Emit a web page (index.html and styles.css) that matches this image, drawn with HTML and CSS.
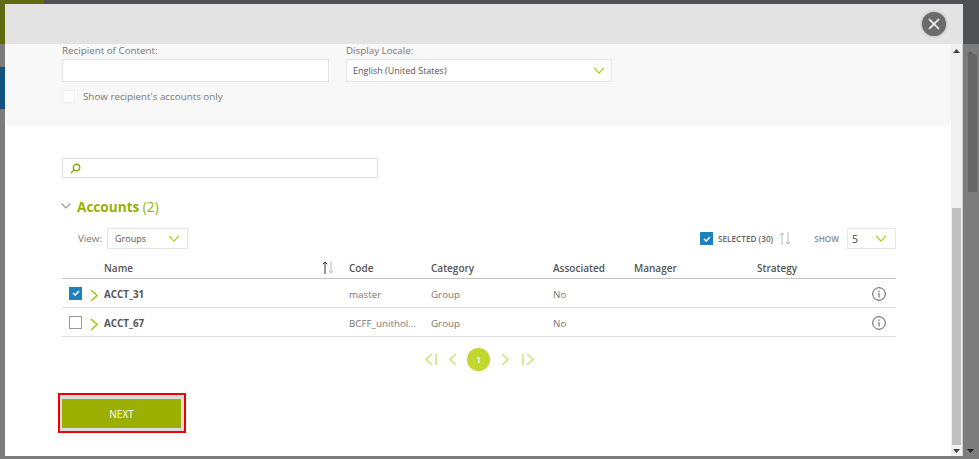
FILE: index.html
```html
<!DOCTYPE html>
<html>

<head>
  <meta charset="utf-8">
  <title>Select Accounts</title>
  <link rel="stylesheet" href="styles.css">
</head>

<body>

  <div class="topstrip">
    <div class="topstrip-olive"></div>
  </div>

  <div class="screen">

    <div class="leftstrip">
      <div class="left-olive"></div>
      <div class="left-gray"></div>
      <div class="left-blue"></div>
    </div>

    <div class="modal">
      <div class="modal-header">
        <button class="close-btn">
          <svg width="12" height="12" viewBox="0 0 12 12"><path d="M1 1 11 11M11 1 1 11" stroke="#fff" stroke-width="1.6" fill="none" /></svg>
        </button>
      </div>

      <div class="modal-main">
        <div class="modal-content">

          <div class="recipient-panel">
            <div class="recipient-fields">
              <div class="field field-recipient">
                <label>Recipient of Content:</label>
                <div class="text-box"></div>
              </div>
              <div class="field field-locale">
                <label>Display Locale:</label>
                <div class="text-box select-box">
                  <span class="locale-value">English (United States)</span>
                  <svg class="select-arrow" width="12" height="7" viewBox="0 0 13 8"><path d="M1 1 6.500 7 12 1" /></svg>
                </div>
              </div>
            </div>
            <div class="recipient-only">
              <span class="blank-check"></span>
              <span>Show recipient's accounts only</span>
            </div>
          </div>

          <div class="accounts">
            <div class="search-box">
              <svg width="11" height="11" viewBox="0 0 11 11"><circle cx="6.500" cy="4.500" r="3.200" /><path d="M4.200 6.800 1 10" /></svg>
            </div>

            <h2 class="accounts-title">
              <svg width="10" height="6" viewBox="0 0 10 6"><path d="M.5.500 5 5 9.500.500" /></svg>
              <span><b>Accounts</b> (2)</span>
            </h2>

            <div class="toolbar">
              <div class="toolbar-left">
                <span class="view-label">View:</span>
                <div class="small-select select-groups">
                  <span>Groups</span>
                  <svg class="select-arrow" width="12" height="7" viewBox="0 0 13 8"><path d="M1 1 6.500 7 12 1" /></svg>
                </div>
              </div>
              <div class="toolbar-right">
                <span class="tick-box">
                  <svg width="8" height="6" viewBox="0 0 8 6"><path d="M1 3 3.200 5 7 1" /></svg>
                </span>
                <span class="selected-count">SELECTED (30)</span>
                <svg class="sort-arrows" width="12" height="13" viewBox="0 0 12 13"><path class="faded" d="M3 13V1M.8 3.200 3 1 5.200 3.200M9 0V12M6.800 9.800 9 12 11.200 9.800" /></svg>
                <span class="show-label">SHOW</span>
                <div class="small-select select-show">
                  <span>5</span>
                  <svg class="select-arrow" width="12" height="7" viewBox="0 0 13 8"><path d="M1 1 6.500 7 12 1" /></svg>
                </div>
              </div>
            </div>

            <table class="accounts-table">
              <colgroup>
                <col class="col-check">
                <col class="col-name">
                <col class="col-code">
                <col class="col-category">
                <col class="col-associated">
                <col class="col-manager">
                <col class="col-strategy">
                <col class="col-info">
              </colgroup>
              <thead>
                <tr>
                  <th></th>
                  <th>
                    <div class="name-head">
                      <span>Name</span>
                      <svg class="sort-arrows" width="12" height="13" viewBox="0 0 12 13"><path class="dark" d="M3 13V1M.8 3.200 3 1 5.200 3.200" /><path class="faded" d="M9 0V12M6.800 9.800 9 12 11.200 9.800" /></svg>
                    </div>
                  </th>
                  <th>Code</th>
                  <th>Category</th>
                  <th>Associated</th>
                  <th>Manager</th>
                  <th>Strategy</th>
                  <th></th>
                </tr>
              </thead>
              <tbody>
                <tr>
                  <td class="check-cell">
                    <div class="row-check">
                      <span class="tick-box">
                        <svg width="8" height="6" viewBox="0 0 8 6"><path d="M1 3 3.200 5 7 1" /></svg>
                      </span>
                      <svg class="row-arrow" width="8" height="13" viewBox="0 0 8 13"><path d="M1 1 7 6.500 1 12" /></svg>
                    </div>
                  </td>
                  <td class="account-name">ACCT_31</td>
                  <td>master</td>
                  <td>Group</td>
                  <td>No</td>
                  <td></td>
                  <td></td>
                  <td>
                    <svg class="info" width="14" height="14" viewBox="0 0 14 14"><circle cx="7" cy="7" r="6.300" /><path d="M7 6V10.500M7 3.500V5" /></svg>
                  </td>
                </tr>
                <tr>
                  <td class="check-cell">
                    <div class="row-check">
                      <span class="empty-box"></span>
                      <svg class="row-arrow" width="8" height="13" viewBox="0 0 8 13"><path d="M1 1 7 6.500 1 12" /></svg>
                    </div>
                  </td>
                  <td class="account-name">ACCT_67</td>
                  <td>BCFF_unithol...</td>
                  <td>Group</td>
                  <td>No</td>
                  <td></td>
                  <td></td>
                  <td>
                    <svg class="info" width="14" height="14" viewBox="0 0 14 14"><circle cx="7" cy="7" r="6.300" /><path d="M7 6V10.500M7 3.500V5" /></svg>
                  </td>
                </tr>
              </tbody>
            </table>

            <div class="pager">
              <svg class="page-first" width="12" height="13" viewBox="0 0 12 13"><path d="M7 1 1 6.500 7 12M11 1V12" /></svg>
              <svg width="8" height="13" viewBox="0 0 8 13"><path d="M7 1 1 6.500 7 12" /></svg>
              <span class="page-current">1</span>
              <svg width="8" height="13" viewBox="0 0 8 13"><path d="M1 1 7 6.500 1 12" /></svg>
              <svg class="page-last" width="12" height="13" viewBox="0 0 12 13"><path d="M5 1 11 6.500 5 12M1 1V12" /></svg>
            </div>

            <div class="next-mark">
              <button class="next-btn">NEXT</button>
            </div>
          </div>

        </div>

        <!-- scrollbar of the dialog -->
        <div class="inner-scroll">
          <svg class="scroll-up" width="7" height="4" viewBox="0 0 7 4"><path d="M3.500 0 7 4H0Z" /></svg>
          <div class="inner-thumb"></div>
          <svg class="scroll-down" width="7" height="4" viewBox="0 0 7 4"><path d="M0 0H7L3.500 4Z" /></svg>
        </div>
      </div>
    </div>

    <!-- scrollbar of the page behind -->
    <div class="outer-scroll">
      <div class="outer-scroll-head"></div>
      <svg class="outer-up" width="7" height="4" viewBox="0 0 7 4"><path d="M3.500 0 7 4H0Z" /></svg>
      <div class="outer-thumb"></div>
      <svg class="outer-down" width="7" height="4" viewBox="0 0 7 4"><path d="M0 0H7L3.500 4Z" /></svg>
    </div>

  </div>

</body>

</html>
```

FILE: styles.css
```css
html,
body {
  margin: 0;
  height: 459px;
  overflow: hidden;
}

body {
  background: #7c7c7c;
  font-family: "Open Sans", sans-serif;
  font-size: 9.8px;
  color: #777;
}

.topstrip {
  height: 4px;
  background: #4f5152;
}

.topstrip-olive {
  width: 44px;
  height: 4px;
  background: #5f6b0e;
}

.screen {
  display: flex;
  height: 452px;
}

/* page behind the dialog */
.leftstrip {
  width: 5px;
  flex: none;
}

.left-olive {
  height: 40px;
  background: #5f6b0e;
}

.left-gray {
  height: 23px;
  background: #7c7c7c;
}

.left-blue {
  height: 42px;
  background: #14527f;
}

.modal {
  width: 958px;
  flex: none;
  display: flex;
  flex-direction: column;
  background: #fff;
}

.modal-header {
  height: 40px;
  flex: none;
  display: flex;
  justify-content: flex-end;
  align-items: center;
  padding-right: 17px;
  background: #e3e3e3;
}

.close-btn {
  width: 24px;
  height: 24px;
  display: flex;
  align-items: center;
  justify-content: center;
  padding: 0;
  border: none;
  border-radius: 50%;
  background: #6b6b6b;
  box-shadow: 0 0 3px rgba(0, 0, 0, 0.35);
}

.modal-main {
  flex: 1;
  display: flex;
  min-height: 0;
}

.modal-content {
  flex: 1;
  min-width: 0;
}

.recipient-panel {
  height: 82px;
  box-sizing: border-box;
  padding: 0 0 0 57px;
  background: #f8f8f8;
}

.recipient-fields {
  display: flex;
  gap: 17px;
}

.field label {
  display: block;
  height: 15px;
  line-height: 13px;
}

.field-recipient {
  width: 267px;
}

.field-locale {
  width: 266px;
}

.text-box {
  height: 23px;
  box-sizing: border-box;
  border: 1px solid #e6e6e6;
  background: #fff;
}

.select-box {
  display: flex;
  align-items: center;
  justify-content: space-between;
  padding: 0 6px;
  color: #555;
  font-size: 9px;
}

.select-arrow path {
  fill: none;
  stroke: #b5cc18;
  stroke-width: 1.5;
}

.recipient-only {
  display: flex;
  align-items: center;
  gap: 8px;
  height: 13px;
  margin-top: 8px;
  line-height: 12px;
}

.blank-check {
  width: 13px;
  height: 13px;
  box-sizing: border-box;
  border: 1px solid #eee;
  background: #fff;
}

.accounts {
  padding: 32px 55px 0 57px;
}

.search-box {
  width: 316px;
  height: 20px;
  box-sizing: border-box;
  display: flex;
  align-items: center;
  padding-left: 7px;
  border: 1px solid #e0e0e0;
}

.search-box svg {
  fill: none;
  stroke: #8fa800;
  stroke-width: 1.4;
}

.accounts-title {
  display: flex;
  align-items: center;
  gap: 6px;
  height: 20px;
  margin: 18px 0 0 -1px;
  font-size: 13.6px;
  font-weight: normal;
  color: #9aaf00;
}

.accounts-title svg {
  fill: none;
  stroke: #999;
  stroke-width: 1.2;
}

.toolbar {
  display: flex;
  justify-content: space-between;
  align-items: center;
  height: 21px;
  margin-top: 12px;
}

.toolbar-left,
.toolbar-right {
  display: flex;
  align-items: center;
}

.view-label {
  width: 24px;
  margin: 0 5px 0 16px;
}

.small-select {
  height: 21px;
  box-sizing: border-box;
  display: flex;
  align-items: center;
  justify-content: space-between;
  padding: 0 7px;
  border: 1px solid #e6e6e6;
  font-size: 9px;
  color: #555;
}

.select-groups {
  width: 81px;
}

.select-show {
  width: 49px;
  padding-left: 4px;
  padding-right: 8px;
  font-size: 10.5px;
  color: #444;
}

.tick-box {
  width: 13px;
  height: 13px;
  flex: none;
  display: flex;
  align-items: center;
  justify-content: center;
  background: #1f80c0;
}

.tick-box svg {
  fill: none;
  stroke: #fff;
  stroke-width: 1.5;
}

.selected-count {
  margin-left: 5px;
  font-size: 8.2px;
  font-weight: 600;
  color: #666;
}

.toolbar-right .sort-arrows {
  margin-left: 6px;
}

.sort-arrows path {
  fill: none;
  stroke-width: 1;
}

.sort-arrows .dark {
  stroke: #333;
}

.sort-arrows .faded {
  stroke: #bbb;
}

.show-label {
  margin: 0 8px 0 23px;
  font-size: 8.2px;
  font-weight: 600;
  color: #888;
}

.accounts-table {
  width: 834px;
  margin-top: 9px;
  border-collapse: collapse;
  table-layout: fixed;
}

.col-check {
  width: 42px;
}

.col-name {
  width: 245px;
}

.col-code {
  width: 82px;
}

.col-category {
  width: 122px;
}

.col-associated {
  width: 81px;
}

.col-manager {
  width: 123px;
}

.col-strategy {
  width: 115px;
}

.col-info {
  width: 24px;
}

.accounts-table th {
  height: 20px;
  padding: 0;
  border-bottom: 1px solid #c4c4c4;
  text-align: left;
  font-size: 10px;
  font-weight: 600;
  color: #555;
}

.accounts-table td {
  height: 26px;
  padding: 2px 0 0;
  border-bottom: 1px solid #ddd;
}

.accounts-table .check-cell {
  height: 28px;
  padding: 0;
}

.name-head {
  display: flex;
  justify-content: space-between;
  align-items: center;
  padding-right: 15px;
}

.name-head .sort-arrows {
  margin-top: -2px;
}

.account-name {
  font-weight: 700;
  color: #555;
}

.row-check {
  display: flex;
  align-items: center;
  gap: 8px;
  padding-left: 7px;
}

.empty-box {
  width: 13px;
  height: 13px;
  flex: none;
  box-sizing: border-box;
  border: 1px solid #999;
}

.row-arrow {
  margin-top: 5px;
}

.row-arrow path {
  fill: none;
  stroke: #a9c41a;
  stroke-width: 1.6;
}

.info {
  display: block;
}

.info circle,
.info path {
  fill: none;
  stroke: #555;
  stroke-width: 1;
}

.pager {
  display: flex;
  align-items: center;
  margin: 11px 0 0 363px;
}

.pager svg {
  flex: none;
  fill: none;
  stroke: #d3e27c;
  stroke-width: 1.6;
}

.page-first {
  margin-right: 12px;
}

.page-last {
  margin-left: 13px;
}

.page-current {
  width: 23px;
  height: 23px;
  flex: none;
  margin: 0 11px 0 10px;
  border-radius: 50%;
  background: #c1d72e;
  color: #fff;
  font-size: 9px;
  font-weight: 600;
  line-height: 23px;
  text-align: center;
}

.next-mark {
  width: 128px;
  height: 40px;
  box-sizing: border-box;
  margin: 22px 0 0 -4px;
  padding: 4px 3px 3px 2px;
  border: 2px solid #f00000;
  background: #dcdcdc;
}

.next-btn {
  display: block;
  width: 119px;
  height: 29px;
  padding: 0;
  border: none;
  background: #9aaf00;
  color: #fff;
  font-family: "Open Sans", sans-serif;
  font-size: 10px;
}

.inner-scroll {
  width: 11px;
  flex: none;
  position: relative;
  background: #f0f0f0;
  border-right: 1px solid #cfcfcf;
}

.inner-scroll svg {
  position: absolute;
  left: 2px;
  fill: #444;
}

.scroll-up {
  top: 5px;
}

.scroll-down {
  bottom: 3px;
}

.inner-thumb {
  position: absolute;
  top: 164px;
  left: 1px;
  width: 9px;
  height: 237px;
  background: #c0c0c0;
}

.outer-scroll {
  flex: 1;
  position: relative;
}

.outer-scroll-head {
  height: 40px;
  background: #4f5152;
}

.outer-scroll svg {
  position: absolute;
  left: 4px;
}

.outer-up {
  top: 47px;
  fill: #5c5c5c;
}

.outer-down {
  bottom: 3px;
  fill: #222;
}

.outer-thumb {
  position: absolute;
  top: 50px;
  left: 5px;
  width: 9px;
  height: 138px;
  background: #666;
}
```
